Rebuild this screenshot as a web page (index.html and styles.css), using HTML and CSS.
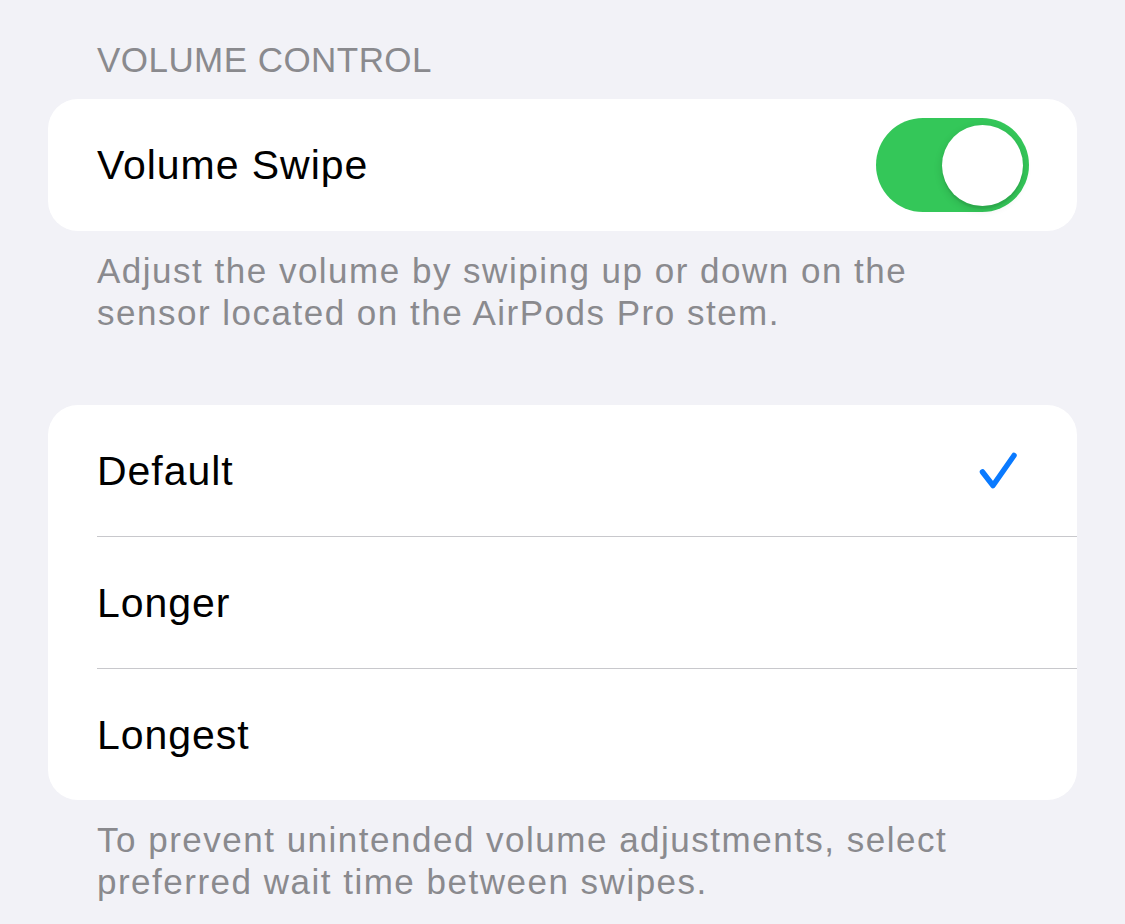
FILE: index.html
```html
<!DOCTYPE html>
<html lang="en">
<head>
<meta charset="utf-8">
<title>Volume Control</title>
<link rel="stylesheet" href="styles.css">
</head>
<body>
<main class="page">
  <h2 class="section-header">VOLUME CONTROL</h2>
  <div class="card">
    <div class="row">
      <span class="row-label">Volume Swipe</span>
      <div class="toggle on" role="switch" aria-checked="true"><span class="knob"></span></div>
    </div>
  </div>
  <p class="section-footer">Adjust the volume by swiping up or down on the<br>sensor located on the AirPods Pro stem.</p>

  <div class="card card-list">
    <div class="row">
      <span class="row-label">Default</span>
      <svg class="check" width="40" height="40" viewBox="0 0 40 40" aria-hidden="true">
        <path d="M4.5 21 L15 34.5 L36 4.5" fill="none" stroke="#0A7AFF" stroke-width="5.5" stroke-linecap="round" stroke-linejoin="round"/>
      </svg>
    </div>
    <div class="divider"></div>
    <div class="row">
      <span class="row-label">Longer</span>
    </div>
    <div class="divider"></div>
    <div class="row">
      <span class="row-label">Longest</span>
    </div>
  </div>
  <p class="section-footer last">To prevent unintended volume adjustments, select<br>preferred wait time between swipes.</p>
</main>
</body>
</html>
```
FILE: styles.css
```css
html, body {
  margin: 0;
  padding: 0;
  background: #F2F2F7;
}
body {
  font-family: "Liberation Sans", Arial, sans-serif;
  color: #000;
}
.page {
  padding: 39px 48px 0 48px;
  display: flex;
  flex-direction: column;
}
.section-header {
  margin: 0 0 18px 49px;
  font-size: 35px;
  line-height: 42px;
  font-weight: 400;
  letter-spacing: 0.45px;
  color: #8A8A8E;
}
.card {
  background: #fff;
  border-radius: 30px;
  display: flex;
  flex-direction: column;
  overflow: hidden;
}
.row {
  height: 131px;
  display: flex;
  align-items: center;
  justify-content: space-between;
  padding: 0 48px 0 49px;
}
.card:first-of-type .row {
  height: 132px;
}
.row-label {
  font-size: 41px;
  line-height: 50px;
  letter-spacing: 0.95px;
}
.divider {
  height: 1px;
  background: #C8C8CC;
  margin-left: 49px;
}
.toggle {
  width: 153px;
  height: 94px;
  border-radius: 47px;
  background: #34C759;
  position: relative;
  flex-shrink: 0;
}
.knob {
  position: absolute;
  top: 7px;
  right: 6px;
  width: 81px;
  height: 81px;
  border-radius: 50%;
  background: #fff;
  box-shadow: 0 3px 8px rgba(0,0,0,0.15), 0 3px 1px rgba(0,0,0,0.06);
}
.check {
  margin-right: 11px;
  flex-shrink: 0;
}
.section-footer {
  margin: 19px 0 71px 49px;
  font-size: 35px;
  line-height: 42px;
  letter-spacing: 1.5px;
  color: #8A8A8E;
}
.section-footer.last {
  margin-bottom: 0;
}
```
